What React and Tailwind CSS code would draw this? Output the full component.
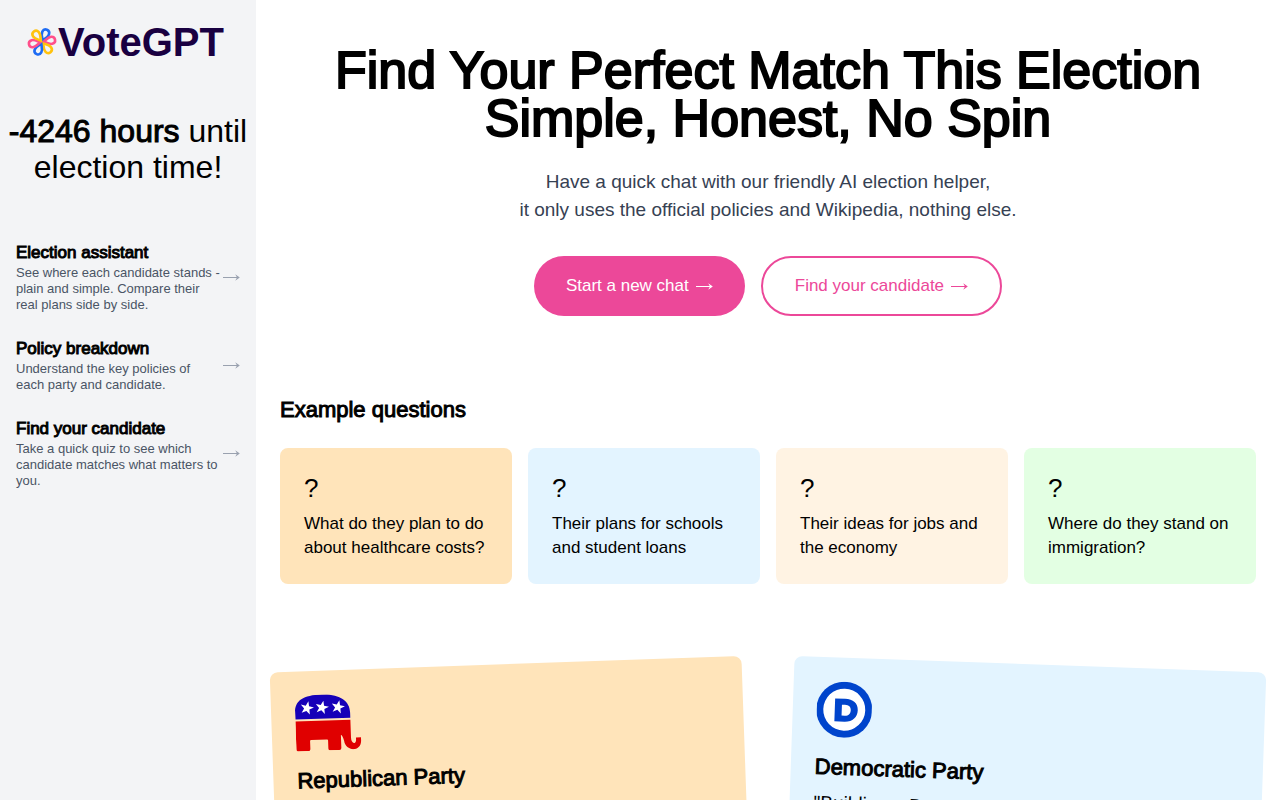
import React from 'react';

const tools = [
    {
        title: 'Election assistant',
        text: 'See where each candidate stands - plain and simple. Compare their real plans side by side.',
    },
    { title: 'Policy breakdown', text: 'Understand the key policies of each party and candidate.' },
    {
        title: 'Find your candidate',
        text: 'Take a quick quiz to see which candidate matches what matters to you.',
    },
];

const questions = [
    { text: 'What do they plan to do about healthcare costs?', color: 'bg-[#ffe4ba]' },
    { text: 'Their plans for schools and student loans', color: 'bg-[#e3f4ff]' },
    { text: 'Their ideas for jobs and the economy', color: 'bg-[#fff3e3]' },
    { text: 'Where do they stand on immigration?', color: 'bg-[#e3ffe3]' },
];

const petals = [
    { angle: 22, color: '#1d6bf3' },
    { angle: 80, color: '#ff4f8b' },
    { angle: 140, color: '#ffc20e' },
    { angle: 204, color: '#1d6bf3' },
    { angle: 260, color: '#ff4f8b' },
    { angle: 322, color: '#ffc20e' },
];

const Logo = () => (
    <a href="#" className="flex items-center gap-[2px] text-[#190041]">
        <svg viewBox="-14 -14 28 28" className="h-7 w-7 overflow-visible" fill="none" strokeWidth="2.6">
            {petals.map((petal) => (
                <path
                    key={petal.angle}
                    d="M0 -1.8 C-1.6 -4.5 -3.8 -6.8 -3.6 -9.8 C-3.2 -14.4 3.2 -14.4 3.6 -9.8 C3.8 -6.8 1.6 -4.5 0 -1.8 Z"
                    stroke={petal.color}
                    transform={`rotate(${petal.angle})`}
                />
            ))}
        </svg>
        <span className="text-[40px] leading-8 font-bold">VoteGPT</span>
    </a>
);

const Arrow = () => (
    <svg viewBox="0 0 17 8" className="h-2 w-[17px] shrink-0">
        <path d="M0 4 H15 V5 H0 Z" fill="currentColor" />
        <path d="M12.2 1.2 L16.8 4.5 L12.2 7.8 L14 4.5 Z" fill="currentColor" />
    </svg>
);

const Star = ({ x }) => (
    <path
        d="M0 -7 L1.7 -2.2 L6.7 -2.2 L2.7 0.9 L4.2 5.7 L0 2.8 L-4.2 5.7 L-2.7 0.9 L-6.7 -2.2 L-1.7 -2.2 Z"
        fill="#fff"
        transform={`translate(${x} 13) rotate(14)`}
    />
);

const RepublicanLogo = () => (
    <svg viewBox="0 0 66 56" className="h-14 w-[66px]">
        <path d="M0 24 V17 C0 5 9 0 27 0 C45 0 55 7 55 19 V24 Z" fill="#1600b8" />
        <Star x={12} />
        <Star x={27} />
        <Star x={43} />
        <path
            d="M0 26 H55 V44 C55 51 60 51 60 46 V44 H65 V47 C65 59 49 58 48 47 C47 43 46 41 45 41 V54 Q45 56 43 56 H34 Q32 56 32 54 V46 Q32 45 31 45 H15 Q14 45 14 46 V54 Q14 56 12 56 H2 Q0 56 0 54 Z"
            fill="#e00000"
        />
    </svg>
);

const DemocraticLogo = () => (
    <svg viewBox="0 0 55 56" className="h-14 w-[55px]">
        <circle cx="27.5" cy="28" r="28" fill="#0044cc" />
        <circle cx="27.5" cy="28" r="21" fill="#fff" />
        <path
            fillRule="evenodd"
            d="M18 17 H28 C36 17 41 21 41 28 C41 35 36 40 28 40 H18 Z M25 23 V34 H28 C32 34 34 32 34 28 C34 25 32 23 28 23 Z"
            fill="#0044cc"
        />
    </svg>
);

const Sidebar = () => (
    <aside className="sticky top-0 h-screen w-64 shrink-0 bg-gray-100">
        <div className="px-7 pt-[26px]">
            <Logo />
        </div>
        <p className="mt-[55px] text-center text-[32px] leading-9">
            <span className="[-webkit-text-stroke:1px_black]">-4246 hours</span> until election time!
        </p>
        <nav className="mt-14 flex flex-col gap-6 px-4">
            {tools.map((tool) => (
                <a key={tool.title} href="#" className="flex items-center justify-between gap-[2px]">
                    <div>
                        <h3 className="text-[17px] leading-6 [-webkit-text-stroke:1px_black]">{tool.title}</h3>
                        <p className="text-[13px] leading-4 text-gray-600">{tool.text}</p>
                    </div>
                    <span className="text-gray-400">
                        <Arrow />
                    </span>
                </a>
            ))}
        </nav>
    </aside>
);

const App = () => {
    return (
        <div className="flex min-h-screen bg-white font-['Liberation_Sans',Arial,sans-serif] text-black">
            <Sidebar />
            <main className="min-w-0 flex-1 overflow-hidden px-6 pt-[46px] pb-20">
                <section className="text-center">
                    <h1 className="text-[52px] leading-12 [-webkit-text-stroke:2px_black]">
                        Find Your Perfect Match This Election
                        <br />
                        Simple, Honest, No Spin
                    </h1>
                    <p className="mt-[26px] text-[19px] leading-7 text-gray-700">
                        Have a quick chat with our friendly AI election helper,
                        <br />
                        it only uses the official policies and Wikipedia, nothing else.
                    </p>
                    <div className="mt-8 flex justify-center gap-4 text-[17px] leading-7">
                        <button className="flex items-center gap-[7px] rounded-full bg-[#ec4899] px-8 py-4 text-white">
                            Start a new chat <Arrow />
                        </button>
                        <button className="flex items-center gap-[7px] rounded-full border-2 border-[#ec4899] px-8 py-[14px] text-[#ec4899]">
                            Find your candidate <Arrow />
                        </button>
                    </div>
                </section>

                <section className="mt-20">
                    <h2 className="text-[22px] leading-7 [-webkit-text-stroke:1px_black]">Example questions</h2>
                    <div className="mt-6 grid grid-cols-4 gap-4">
                        {questions.map((question) => (
                            <button key={question.text} className={`rounded-lg p-6 text-left ${question.color}`}>
                                <div className="mb-2 text-[26px] leading-8">?</div>
                                <p className="text-[17px] leading-6">{question.text}</p>
                            </button>
                        ))}
                    </div>
                </section>

                <section className="mt-20 grid grid-cols-2 gap-8">
                    <div className="min-h-[600px] -rotate-2 rounded-lg bg-[#ffe4ba] p-6">
                        <RepublicanLogo />
                        <h2 className="mt-4 text-[22px] leading-7 [-webkit-text-stroke:1px_black]">Republican Party</h2>
                    </div>
                    <div className="min-h-[600px] rotate-2 rounded-lg bg-[#e3f4ff] p-6">
                        <DemocraticLogo />
                        <h2 className="mt-4 text-[22px] leading-7 [-webkit-text-stroke:1px_black]">Democratic Party</h2>
                        <p className="mt-2 text-[19px] leading-7">"Building a Better</p>
                    </div>
                </section>
            </main>
        </div>
    );
};

export default App;
